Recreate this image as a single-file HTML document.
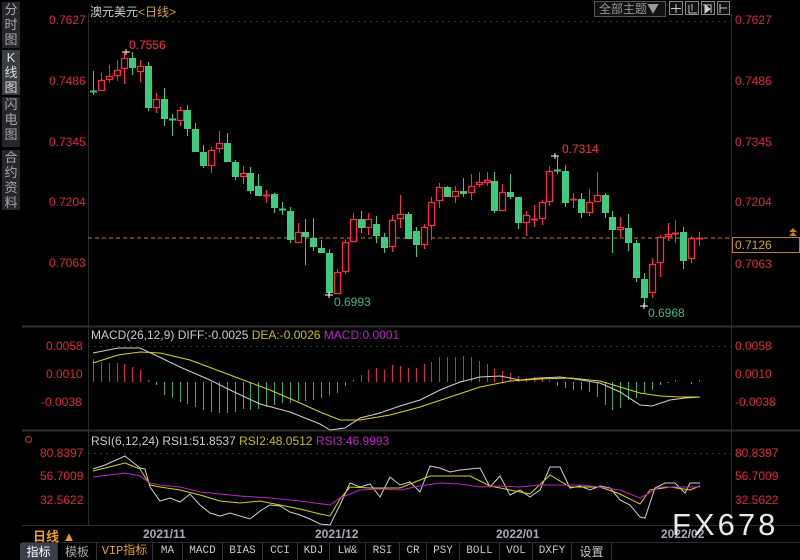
<!DOCTYPE html>
<html><head><meta charset="utf-8"><style>
body{margin:0;background:#000;width:800px;height:560px;overflow:hidden;font-family:"Liberation Sans","Noto Sans CJK SC",sans-serif;position:relative}
.sb{position:absolute;left:2px;width:18px;background:#25272b;color:#a8a8a8;font-size:13px;line-height:15px;text-align:center}
.tb{position:absolute;top:543px;height:17px;line-height:17px;font-size:11px;color:#c8c8c8;text-align:center;border-right:1px solid #333;font-family:"Liberation Mono","Noto Sans CJK SC",monospace}
.lbl{position:absolute;font-size:12px;color:#e0283c}
</style></head><body>
<div class="sb" style="top:2px;height:46px">分<br>时<br>图</div>
<div class="sb" style="top:50px;height:45px;background:#3a3d43;color:#ddd">K<br>线<br>图</div>
<div class="sb" style="top:97px;height:50px">闪<br>电<br>图</div>
<div class="sb" style="top:150px;height:60px">合<br>约<br>资<br>料</div>
<div style="position:absolute;left:0;top:212px;width:22px;height:330px;background:#000"></div>

<svg width="800" height="560" style="position:absolute;left:0;top:0">
<g stroke="#2a2a2a" stroke-width="1">
<line x1="88.5" y1="14" x2="88.5" y2="526"/>
<line x1="731.5" y1="14" x2="731.5" y2="526"/>
<line x1="22" y1="326.5" x2="800" y2="326.5" stroke="#303030" stroke-width="2"/>
<line x1="22" y1="430.5" x2="800" y2="430.5" stroke="#303030" stroke-width="2"/>
<line x1="22" y1="525.5" x2="800" y2="525.5"/>
<line x1="22" y1="542.5" x2="800" y2="542.5"/>
</g>
<g stroke="#333" stroke-dasharray="2,4">
<line x1="88" y1="21.5" x2="731" y2="21.5"/>
<line x1="88" y1="346.5" x2="731" y2="346.5"/>
<line x1="88" y1="453.5" x2="731" y2="453.5"/>
</g>
<line x1="88" y1="238" x2="731" y2="238" stroke="#c07a28" stroke-dasharray="4,3"/>
<g id="cd"></g>
<g id="hist"></g>
<polyline fill="none" stroke="#d0d0d0" stroke-width="1" points="93,353 118,348 140,348 155,355 180,367 210,380 230,390 260,404 290,412 320,424 330,430 345,428 360,418 380,413 400,406 420,400 440,390 460,382 480,377 500,376 520,380 540,378 560,377 575,379 600,383 620,392 640,405 652,406 670,400 685,398 700,397"/>
<polyline fill="none" stroke="#d8d800" stroke-width="1" points="93,363 118,355 140,352 160,353 190,360 230,375 270,390 300,403 320,412 340,420 360,420 390,415 420,407 450,397 480,387 510,381 540,379 570,378 600,381 620,387 640,393 660,396 680,397 700,397"/>
<polyline fill="none" stroke="#d0d0d0" points="93,469 105,465 125,456 130,460 140,468 145,469 150,487 160,501 170,498 180,502 190,494 200,505 210,513 220,516 230,513 240,516 250,519 260,511 270,505 280,506 290,512 300,515 310,519 320,524 330,525 340,505 350,483 360,487 370,484 380,497 390,477 400,485 410,482 420,492 430,466 440,468 450,472 460,470 470,469 480,468 490,487 500,476 510,495 520,490 530,497 540,490 550,467 560,467 570,488 580,486 590,490 600,486 610,488 620,500 630,505 640,517 645,518 655,488 665,483 675,483 685,493 690,483 700,483"/>
<polyline fill="none" stroke="#d8d800" points="93,471 125,463 140,469 150,485 160,487 180,490 200,495 220,501 240,503 260,501 280,505 300,509 320,514 330,516 340,499 350,487 370,488 400,488 430,476 450,476 470,476 490,486 510,490 530,494 550,475 570,487 600,487 620,494 640,504 650,490 670,487 690,490 700,486"/>
<polyline fill="none" stroke="#c020c8" points="93,477 125,473 140,476 150,483 160,485 180,487 200,492 220,494 240,496 270,498 300,501 330,505 340,498 360,490 380,489 400,490 420,486 440,483 460,484 480,487 500,486 520,487 540,485 560,485 580,485 600,487 620,490 640,498 660,487 680,487 700,487"/>
<text x="129" y="49" fill="#ff3344" font-size="12">0.7556</text>
<text x="562" y="153" fill="#ff3344" font-size="12">0.7314</text>
<text x="334" y="306" fill="#3dbb80" font-size="12">0.6993</text>
<text x="648" y="317" fill="#3dbb80" font-size="12">0.6968</text>
<g stroke="#fff"><line x1="122" y1="52" x2="130" y2="52"/><line x1="126" y1="49" x2="126" y2="55"/>
<line x1="551" y1="156" x2="559" y2="156"/><line x1="555" y1="153" x2="555" y2="159"/>
<line x1="325" y1="295" x2="333" y2="295"/><line x1="329" y1="292" x2="329" y2="298"/>
<line x1="640" y1="306" x2="648" y2="306"/><line x1="644" y1="303" x2="644" y2="309"/></g>
<rect x="732.5" y="237.5" width="67" height="15" fill="#000" stroke="#c07a28"/>
<text x="735" y="249" fill="#d8a040" font-size="12">0.7126</text>
<path d="M789 236h8l-4-4zM789 232h8l-4-4z" fill="#c07a28"/>
<rect x="594.5" y="1.5" width="71" height="15" fill="#111" stroke="#555"/>
<text x="599" y="13" fill="#999" font-size="12" font-family="Noto Sans CJK SC">全部主题▼</text>
<g fill="#111" stroke="#888"><rect x="669.5" y="1.5" width="13" height="13"/><rect x="685.5" y="1.5" width="13" height="13"/><rect x="701.5" y="1.5" width="13" height="13"/><rect x="717.5" y="1.5" width="12" height="13"/></g>
<g stroke="#ccc"><path d="M676 4v9M671 8.5h10M689 5v8h8M692 4v7M703 5h8v8"/><path d="M705 5v8l5-4z" fill="#ccc"/><path d="M720 4v9M720 8h7"/></g>
</svg>

<div style="position:absolute;left:90px;top:3px;font-size:12px;color:#ccc">澳元美元<span style="color:#d8a040">&lt;日线&gt;</span></div>
<div class="lbl" style="left:49px;top:13px">0.7627</div>
<div class="lbl" style="left:49px;top:74px">0.7486</div>
<div class="lbl" style="left:49px;top:135px">0.7345</div>
<div class="lbl" style="left:49px;top:195px">0.7204</div>
<div class="lbl" style="left:49px;top:256px">0.7063</div>
<div class="lbl" style="left:735px;top:13px">0.7627</div>
<div class="lbl" style="left:735px;top:74px">0.7486</div>
<div class="lbl" style="left:735px;top:135px">0.7345</div>
<div class="lbl" style="left:735px;top:195px">0.7204</div>
<div class="lbl" style="left:735px;top:257px">0.7063</div>
<div style="position:absolute;left:91px;top:328px;font-size:12px;color:#ccc">MACD(26,12,9) DIFF:-0.0025 <span style="color:#c8c000">DEA:-0.0026</span> <span style="color:#c020c8">MACD:0.0001</span></div>
<div class="lbl" style="left:46px;top:339px">0.0058</div>
<div class="lbl" style="left:46px;top:367px">0.0010</div>
<div class="lbl" style="left:41px;top:395px">-0.0038</div>
<div class="lbl" style="left:735px;top:339px">0.0058</div>
<div class="lbl" style="left:735px;top:367px">0.0010</div>
<div class="lbl" style="left:735px;top:395px">-0.0038</div>
<div style="position:absolute;left:25px;top:436px;width:5px;height:5px;border:1px solid #e0283c;border-radius:50%"></div>
<div style="position:absolute;left:91px;top:434px;font-size:12px;color:#ccc">RSI(6,12,24) RSI1:51.8537 <span style="color:#c8c000">RSI2:48.0512</span> <span style="color:#c020c8">RSI3:46.9993</span></div>
<div class="lbl" style="left:40px;top:446px">80.8397</div>
<div class="lbl" style="left:40px;top:469px">56.7009</div>
<div class="lbl" style="left:40px;top:493px">32.5622</div>
<div class="lbl" style="left:735px;top:446px">80.8397</div>
<div class="lbl" style="left:735px;top:469px">56.7009</div>
<div class="lbl" style="left:735px;top:493px">32.5622</div>
<div style="position:absolute;left:33px;top:526px;font-size:13px;color:#e8a020;font-weight:bold">日线 ▲</div>
<div style="position:absolute;left:143px;top:527px;font-size:12px;color:#aab;font-weight:bold">2021/11</div>
<div style="position:absolute;left:315px;top:527px;font-size:12px;color:#aab;font-weight:bold">2021/12</div>
<div style="position:absolute;left:496px;top:527px;font-size:12px;color:#aab;font-weight:bold">2022/01</div>
<div style="position:absolute;left:661px;top:527px;font-size:12px;color:#aab;font-weight:bold">2022/02</div>
<div style="position:absolute;left:672px;top:507px;font-size:31px;color:#e8e8e8;letter-spacing:3px">FX678</div>
<div class="tb" style="left:20px;width:37px;background:#3a3f4a;color:#fff;font-family:'Noto Sans CJK SC';font-size:12px">指标</div>
<div class="tb" style="left:58px;width:38px;font-family:'Noto Sans CJK SC';font-size:12px;color:#aaa">模板</div>
<div class="tb" style="left:97px;width:55px;color:#e8a020;font-size:12px">VIP指标</div>
<div class="tb" style="left:153px;width:29px">MA</div>
<div class="tb" style="left:183px;width:39px">MACD</div>
<div class="tb" style="left:223px;width:39px">BIAS</div>
<div class="tb" style="left:263px;width:34px">CCI</div>
<div class="tb" style="left:298px;width:31px">KDJ</div>
<div class="tb" style="left:330px;width:35px">LW&amp;</div>
<div class="tb" style="left:366px;width:33px">RSI</div>
<div class="tb" style="left:400px;width:26px">CR</div>
<div class="tb" style="left:427px;width:32px">PSY</div>
<div class="tb" style="left:460px;width:39px">BOLL</div>
<div class="tb" style="left:500px;width:32px">VOL</div>
<div class="tb" style="left:533px;width:38px">DXFY</div>
<div class="tb" style="left:572px;width:39px;font-family:'Noto Sans CJK SC';font-size:12px">设置</div>
<script>
var C=[[91,92,71,95,0],[80,91,73,91,1],[76,80,65,83,1],[70,76,60,81,1],[58,69,52,84,1],[58,68,52,75,0],[66,72,60,82,1],[66,108,62,111,0],[99,108,93,113,1],[99,119,88,126,0],[119,120,114,136,0],[110,121,107,126,1],[110,129,105,136,0],[129,152,123,152,0],[152,166,145,168,0],[150,166,147,173,1],[143,149,131,153,1],[143,162,133,162,0],[162,177,160,180,0],[173,177,166,184,1],[173,191,167,194,0],[186,196,174,196,0],[195,195,190,203,1],[194,208,193,213,0],[209,210,202,215,0],[211,240,207,243,0],[232,243,223,243,1],[232,237,219,265,0],[238,247,218,251,0],[248,253,240,253,0],[253,293,249,295,0],[272,294,269,294,1],[242,272,239,274,1],[219,242,213,242,1],[219,228,211,233,0],[219,228,213,235,1],[224,236,216,243,0],[237,248,233,253,0],[220,247,215,252,1],[214,219,195,228,1],[214,239,212,239,0],[231,245,227,257,0],[227,245,224,249,1],[202,226,197,240,1],[187,201,183,208,1],[187,197,186,197,0],[191,197,186,203,1],[191,194,178,197,0],[186,193,174,200,1],[182,185,172,187,1],[180,183,172,186,1],[181,211,172,213,0],[192,211,184,211,1],[192,197,174,199,0],[197,223,197,229,0],[215,223,211,236,1],[219,219,205,227,1],[202,219,200,225,1],[171,202,166,206,1],[170,171,156,174,0],[171,203,165,207,0],[199,199,193,208,1],[199,213,193,218,0],[202,213,189,216,1],[195,202,172,202,1],[195,213,193,218,0],[217,230,211,253,0],[227,230,217,238,1],[228,243,214,251,0],[243,278,240,282,0],[279,298,273,306,0],[264,293,258,298,1],[237,263,235,277,1],[234,237,223,241,1],[233,233,220,243,1],[232,261,227,269,0],[238,259,236,263,1],[238,238,232,246,1]];
var s='';
C.forEach(function(c,i){var x=Math.round(93+7.87*i),col=c[4]?'#ff2a44':'#3dcc7e';
s+='<line x1="'+(x+.5)+'" y1="'+c[2]+'" x2="'+(x+.5)+'" y2="'+c[3]+'" stroke="'+col+'"/>';
var h=c[1]-c[0];
if(h<2){s+='<line x1="'+(x-3)+'" y1="'+(c[0]+.5)+'" x2="'+(x+4)+'" y2="'+(c[0]+.5)+'" stroke="'+col+'" stroke-width="2"/>';}
else if(c[4]){s+='<rect x="'+(x-2.5)+'" y="'+(c[0]+.5)+'" width="6" height="'+(h-1)+'" fill="#000" stroke="'+col+'" stroke-width="1.3"/>';}
else{s+='<rect x="'+(x-3)+'" y="'+c[0]+'" width="7" height="'+h+'" fill="'+col+'"/>';}
});
document.getElementById('cd').innerHTML=s;
var H=[359,362,363,363,364,367,370,380,385,395,398,402,404,407,410,412,413,413,412,409,410,409,407,405,403,403,401,401,400,398,395,393,386,380,375,370,368,370,365,366,368,368,364,362,357,357,357,356,357,361,364,369,371,373,376,378,377,378,380,386,388,390,390,392,397,405,410,408,400,398,393,390,385,383,380,382,384,380];
var z=382,h='';
H.forEach(function(y,i){var x=Math.round(93+7.87*i)+.5,col=y<z?'#e0283c':'#30b070';
h+='<line x1="'+x+'" y1="'+z+'" x2="'+x+'" y2="'+y+'" stroke="'+col+'"/>';});
document.getElementById('hist').innerHTML=h;
</script>
</body></html>
